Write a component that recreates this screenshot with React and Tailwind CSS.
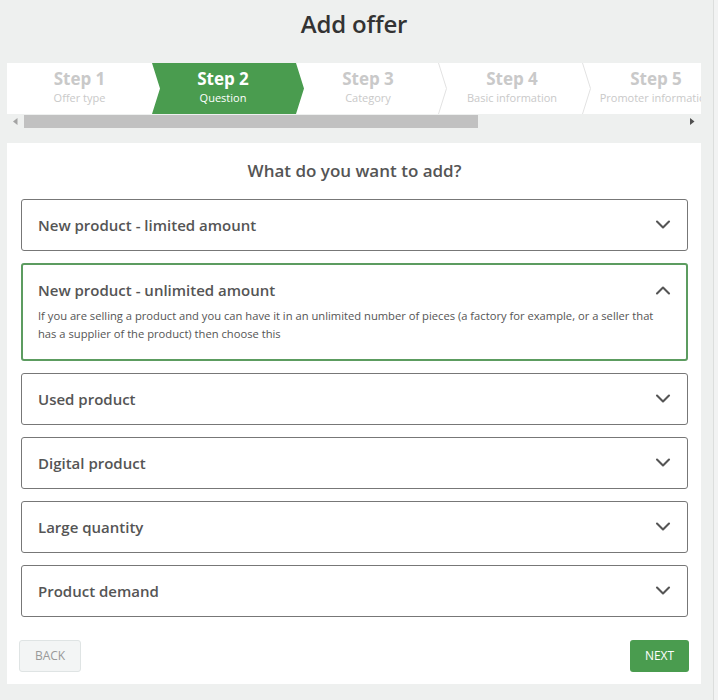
import React from "react";

const Chevron = ({ up }) => (
  <svg width="16" height="10" viewBox="0 0 16 10" className="shrink-0">
    <path
      d={up ? "M2 8.5 L8 2.5 L14 8.5" : "M2 1.5 L8 7.5 L14 1.5"}
      fill="none"
      stroke="#555"
      strokeWidth="2.1"
      strokeLinecap="round"
      strokeLinejoin="round"
    />
  </svg>
);

const Sep = () => (
  <svg width="10" height="51" viewBox="0 0 10 51" className="absolute right-[-8px] top-0">
    <path d="M0.5 0 L8.5 25.5 L0.5 51" fill="none" stroke="#e2e2e2" strokeWidth="1" />
  </svg>
);

const items = [
  { t: "New product - limited amount" },
  {
    t: "New product - unlimited amount",
    open: true,
    d: "If you are selling a product and you can have it in an unlimited number of pieces (a factory for example, or a seller that has a supplier of the product) then choose this",
  },
  { t: "Used product" },
  { t: "Digital product" },
  { t: "Large quantity" },
  { t: "Product demand" },
];

export default function App() {
  return (
    <div
      className="flex min-h-[700px] bg-[#eef0ef]"
      style={{ fontFamily: '"Open Sans", "Noto Sans", sans-serif' }}
    >
      <div className="w-[713px] shrink-0 pl-[7px] pr-[12px]">
        <h1 className="h-[63px] flex items-center justify-center pb-[15px] text-[24px] font-semibold text-[#333] tracking-[-0.2px]">
          Add offer
        </h1>
        {/* steps */}
        <div className="h-[51px] bg-white flex overflow-hidden pb-[4px]">
          <div className="w-[145px] shrink-0 flex flex-col items-center justify-center text-[#c9c9c9]">
            <div className="text-[17px] font-bold leading-[22px]">Step 1</div>
            <div className="text-[11px] leading-[16px]">Offer type</div>
          </div>
          <div className="w-[152px] shrink-0 -mb-[4px] pb-[4px] bg-[#4a9c4f] text-white flex flex-col items-center justify-center pr-[10px] [clip-path:polygon(0_0,144px_0,100%_50%,144px_100%,0_100%,8px_50%)]">
            <div className="text-[17px] font-bold leading-[22px]">Step 2</div>
            <div className="text-[11px] leading-[16px]">Question</div>
          </div>
          <div className="relative w-[144px] shrink-0 -ml-[8px] flex flex-col items-center justify-center text-[#c9c9c9]">
            <div className="text-[17px] font-bold leading-[22px]">Step 3</div>
            <div className="text-[11px] leading-[16px]">Category</div>
            <Sep />
          </div>
          <div className="relative w-[144px] shrink-0 flex flex-col items-center justify-center text-[#c9c9c9]">
            <div className="text-[17px] font-bold leading-[22px]">Step 4</div>
            <div className="text-[11px] leading-[16px]">Basic information</div>
            <Sep />
          </div>
          <div className="w-[144px] shrink-0 flex flex-col items-center justify-center text-[#c9c9c9] whitespace-nowrap">
            <div className="text-[17px] font-bold leading-[22px]">Step 5</div>
            <div className="text-[11px] leading-[16px]">Promoter information</div>
          </div>
        </div>
        {/* fake scrollbar */}
        <div className="h-[15px] flex items-center">
          <div className="w-[17px] flex justify-center">
            <svg width="5" height="7" viewBox="0 0 5 7">
              <path d="M4.5 0 L0 3.5 L4.5 7 Z" fill="#a3a3a3" />
            </svg>
          </div>
          <div className="flex-1 h-[13px] flex">
            <div className="w-[454px] h-full bg-[#c1c1c1]" />
          </div>
          <div className="w-[17px] flex justify-center">
            <svg width="5" height="7" viewBox="0 0 5 7">
              <path d="M0 0 L4.5 3.5 L0 7 Z" fill="#505050" />
            </svg>
          </div>
        </div>
        {/* card */}
        <div className="mt-[14px] h-[541px] bg-white pl-[14px] pr-[13px] pt-[16px] flex flex-col">
          <div className="text-center text-[17px] font-semibold text-[#555] leading-[24px]">
            What do you want to add?
          </div>
          <div className="mt-[16px] flex flex-col gap-[12px]">
            {items.map((it) =>
              it.open ? (
                <div
                  key={it.t}
                  className="h-[98px] rounded-[3px] border-2 border-[#5c9c60] pl-[15px] pr-[15px] pt-[13px]"
                >
                  <div className="flex items-center justify-between">
                    <span className="text-[15px] font-semibold text-[#555] leading-[24px]">{it.t}</span>
                    <Chevron up />
                  </div>
                  <p className="mt-[5px] text-[11.2px] leading-[18px] text-[#555] pr-[10px]">{it.d}</p>
                </div>
              ) : (
                <div
                  key={it.t}
                  className="h-[52px] rounded-[3px] border border-[#777] pl-[16px] pr-[16px] flex items-center justify-between"
                >
                  <span className="text-[15px] font-semibold text-[#555]">{it.t}</span>
                  <Chevron />
                </div>
              )
            )}
          </div>
          <div className="mt-[23px] flex justify-between">
            <button className="-ml-[2px] h-[32px] w-[62px] rounded-[3px] border border-[#dfe4e4] bg-[#f3f5f5] text-[12px] text-[#999]">
              BACK
            </button>
            <button className="-mr-[1px] h-[32px] w-[59px] rounded-[3px] bg-[#4a9c4f] text-[12px] text-white">
              NEXT
            </button>
          </div>
        </div>
      </div>
      <div className="w-px bg-[#dcdedd]" />
      <div className="flex-1 bg-[#f2f3f3]" />
    </div>
  );
}
